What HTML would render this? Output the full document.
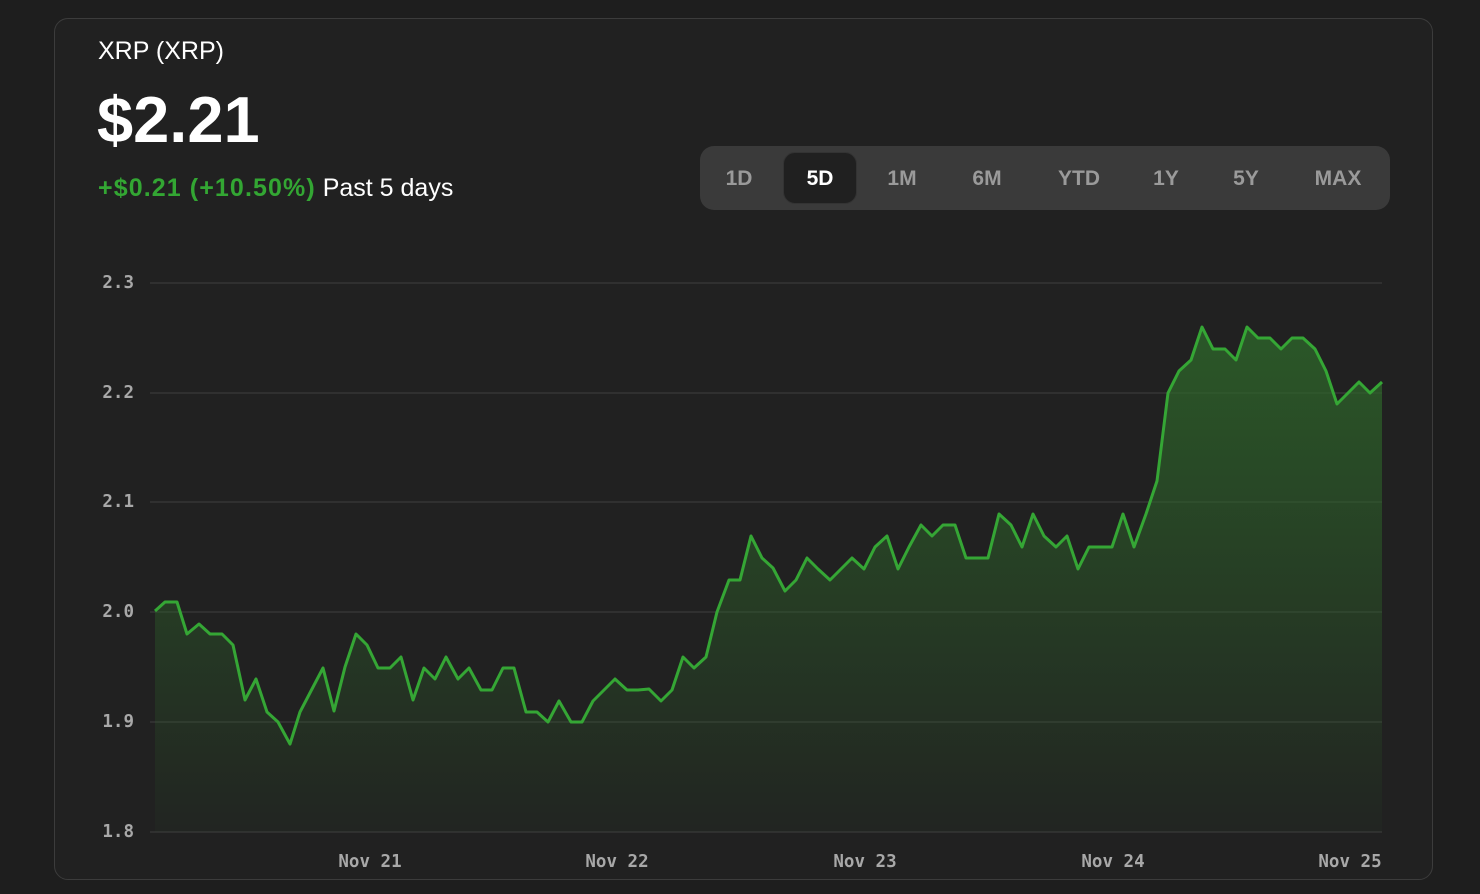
<!DOCTYPE html>
<html><head><meta charset="utf-8"><style>
html,body{margin:0;padding:0;background:#1e1e1e;width:1480px;height:894px;overflow:hidden;font-family:"Liberation Sans",sans-serif}
.card{position:absolute;left:54px;top:18px;width:1379px;height:862px;border:1px solid #3c3c3c;border-radius:14px;background:#212121;box-sizing:border-box}
.t{position:absolute;color:#fff;white-space:nowrap}
.bar{position:absolute;left:700px;top:146px;width:690px;height:64px;background:#3a3a3a;border-radius:14px}
.sel{position:absolute;left:783px;top:152px;width:74px;height:52px;background:#202020;border:1px solid #333;border-radius:12px;box-sizing:border-box}
.b{position:absolute;top:167px;font-weight:bold;font-size:21px;color:#9a9a9a;transform:translateX(-50%)}
</style></head><body>
<div class="card"></div>
<div class="t" style="left:98px;top:37px;font-size:25px">XRP (XRP)</div>
<div class="t" style="left:97px;top:82px;font-size:65px;font-weight:bold">$2.21</div>
<div class="t" style="left:98px;top:174px;font-size:25px"><span style="color:#33a633;font-weight:bold;letter-spacing:1.1px">+$0.21 (+10.50%)</span> Past 5 days</div>
<div class="bar"></div><div class="sel"></div>
<div class="b" style="left:739px">1D</div>
<div class="b" style="left:820px;color:#fff">5D</div>
<div class="b" style="left:902px">1M</div>
<div class="b" style="left:987px">6M</div>
<div class="b" style="left:1079px">YTD</div>
<div class="b" style="left:1166px">1Y</div>
<div class="b" style="left:1246px">5Y</div>
<div class="b" style="left:1338px">MAX</div>
<svg width="1480" height="894" style="position:absolute;left:0;top:0">
<defs><linearGradient id="g" x1="0" y1="0" x2="0" y2="1"><stop offset="0" stop-color="#2e6a2a" stop-opacity="0.75"/><stop offset="1" stop-color="#2e6a2a" stop-opacity="0.05"/></linearGradient></defs>
<g stroke="#3a3a3a" stroke-width="1.3">
<line x1="150" y1="283" x2="1382" y2="283"/><line x1="150" y1="393" x2="1382" y2="393"/><line x1="150" y1="502" x2="1382" y2="502"/><line x1="150" y1="612" x2="1382" y2="612"/><line x1="150" y1="722" x2="1382" y2="722"/><line x1="150" y1="832" x2="1382" y2="832"/></g>
<g font-family="DejaVu Sans Mono,monospace" font-weight="bold" font-size="17.5" fill="#a8a8a8" text-anchor="end">
<text x="134" y="288">2.3</text><text x="134" y="398">2.2</text><text x="134" y="507">2.1</text><text x="134" y="617">2.0</text><text x="134" y="727">1.9</text><text x="134" y="837">1.8</text></g>
<g font-family="DejaVu Sans Mono,monospace" font-weight="bold" font-size="17.5" fill="#a8a8a8" text-anchor="middle">
<text x="370" y="867">Nov 21</text><text x="617" y="867">Nov 22</text><text x="865" y="867">Nov 23</text><text x="1113" y="867">Nov 24</text><text x="1350" y="867">Nov 25</text></g>
<path fill="url(#g)" d="M155,611 L165,602 177,602 187,634 199,624 210,634 222,634 233,645 245,700 256,679 267,712 278,722 290,744 300,712 312,689 323,668 334,711 345,667 356,634 367,645 378,668 390,668 401,657 413,700 424,668 435,679 446,657 458,679 469,668 481,690 492,690 503,668 514,668 526,712 537,712 548,722 559,701 571,722 582,722 593,701 604,690 615,679 627,690 638,690 649,689 661,701 672,690 683,657 694,668 706,657 717,612 729,580 740,580 751,536 762,558 773,568 785,591 796,580 807,558 818,569 830,580 841,569 852,558 864,569 875,547 887,536 898,569 909,547 921,525 932,536 943,525 955,525 966,558 977,558 988,558 999,514 1011,525 1022,547 1033,514 1044,536 1056,547 1067,536 1078,569 1089,547 1101,547 1112,547 1123,514 1134,547 1146,514 1157,481 1168,393 1179,371 1191,360 1202,327 1213,349 1225,349 1236,360 1247,327 1258,338 1270,338 1281,349 1292,338 1303,338 1315,349 1326,371 1337,404 1348,393 1359,382 1370,393 1382,382 L1382,832 L155,832 Z"/>
<path fill="none" stroke="#35a635" stroke-width="3" stroke-linejoin="round" d="M155,611 L165,602 177,602 187,634 199,624 210,634 222,634 233,645 245,700 256,679 267,712 278,722 290,744 300,712 312,689 323,668 334,711 345,667 356,634 367,645 378,668 390,668 401,657 413,700 424,668 435,679 446,657 458,679 469,668 481,690 492,690 503,668 514,668 526,712 537,712 548,722 559,701 571,722 582,722 593,701 604,690 615,679 627,690 638,690 649,689 661,701 672,690 683,657 694,668 706,657 717,612 729,580 740,580 751,536 762,558 773,568 785,591 796,580 807,558 818,569 830,580 841,569 852,558 864,569 875,547 887,536 898,569 909,547 921,525 932,536 943,525 955,525 966,558 977,558 988,558 999,514 1011,525 1022,547 1033,514 1044,536 1056,547 1067,536 1078,569 1089,547 1101,547 1112,547 1123,514 1134,547 1146,514 1157,481 1168,393 1179,371 1191,360 1202,327 1213,349 1225,349 1236,360 1247,327 1258,338 1270,338 1281,349 1292,338 1303,338 1315,349 1326,371 1337,404 1348,393 1359,382 1370,393 1382,382"/>
</svg>
</body></html>
